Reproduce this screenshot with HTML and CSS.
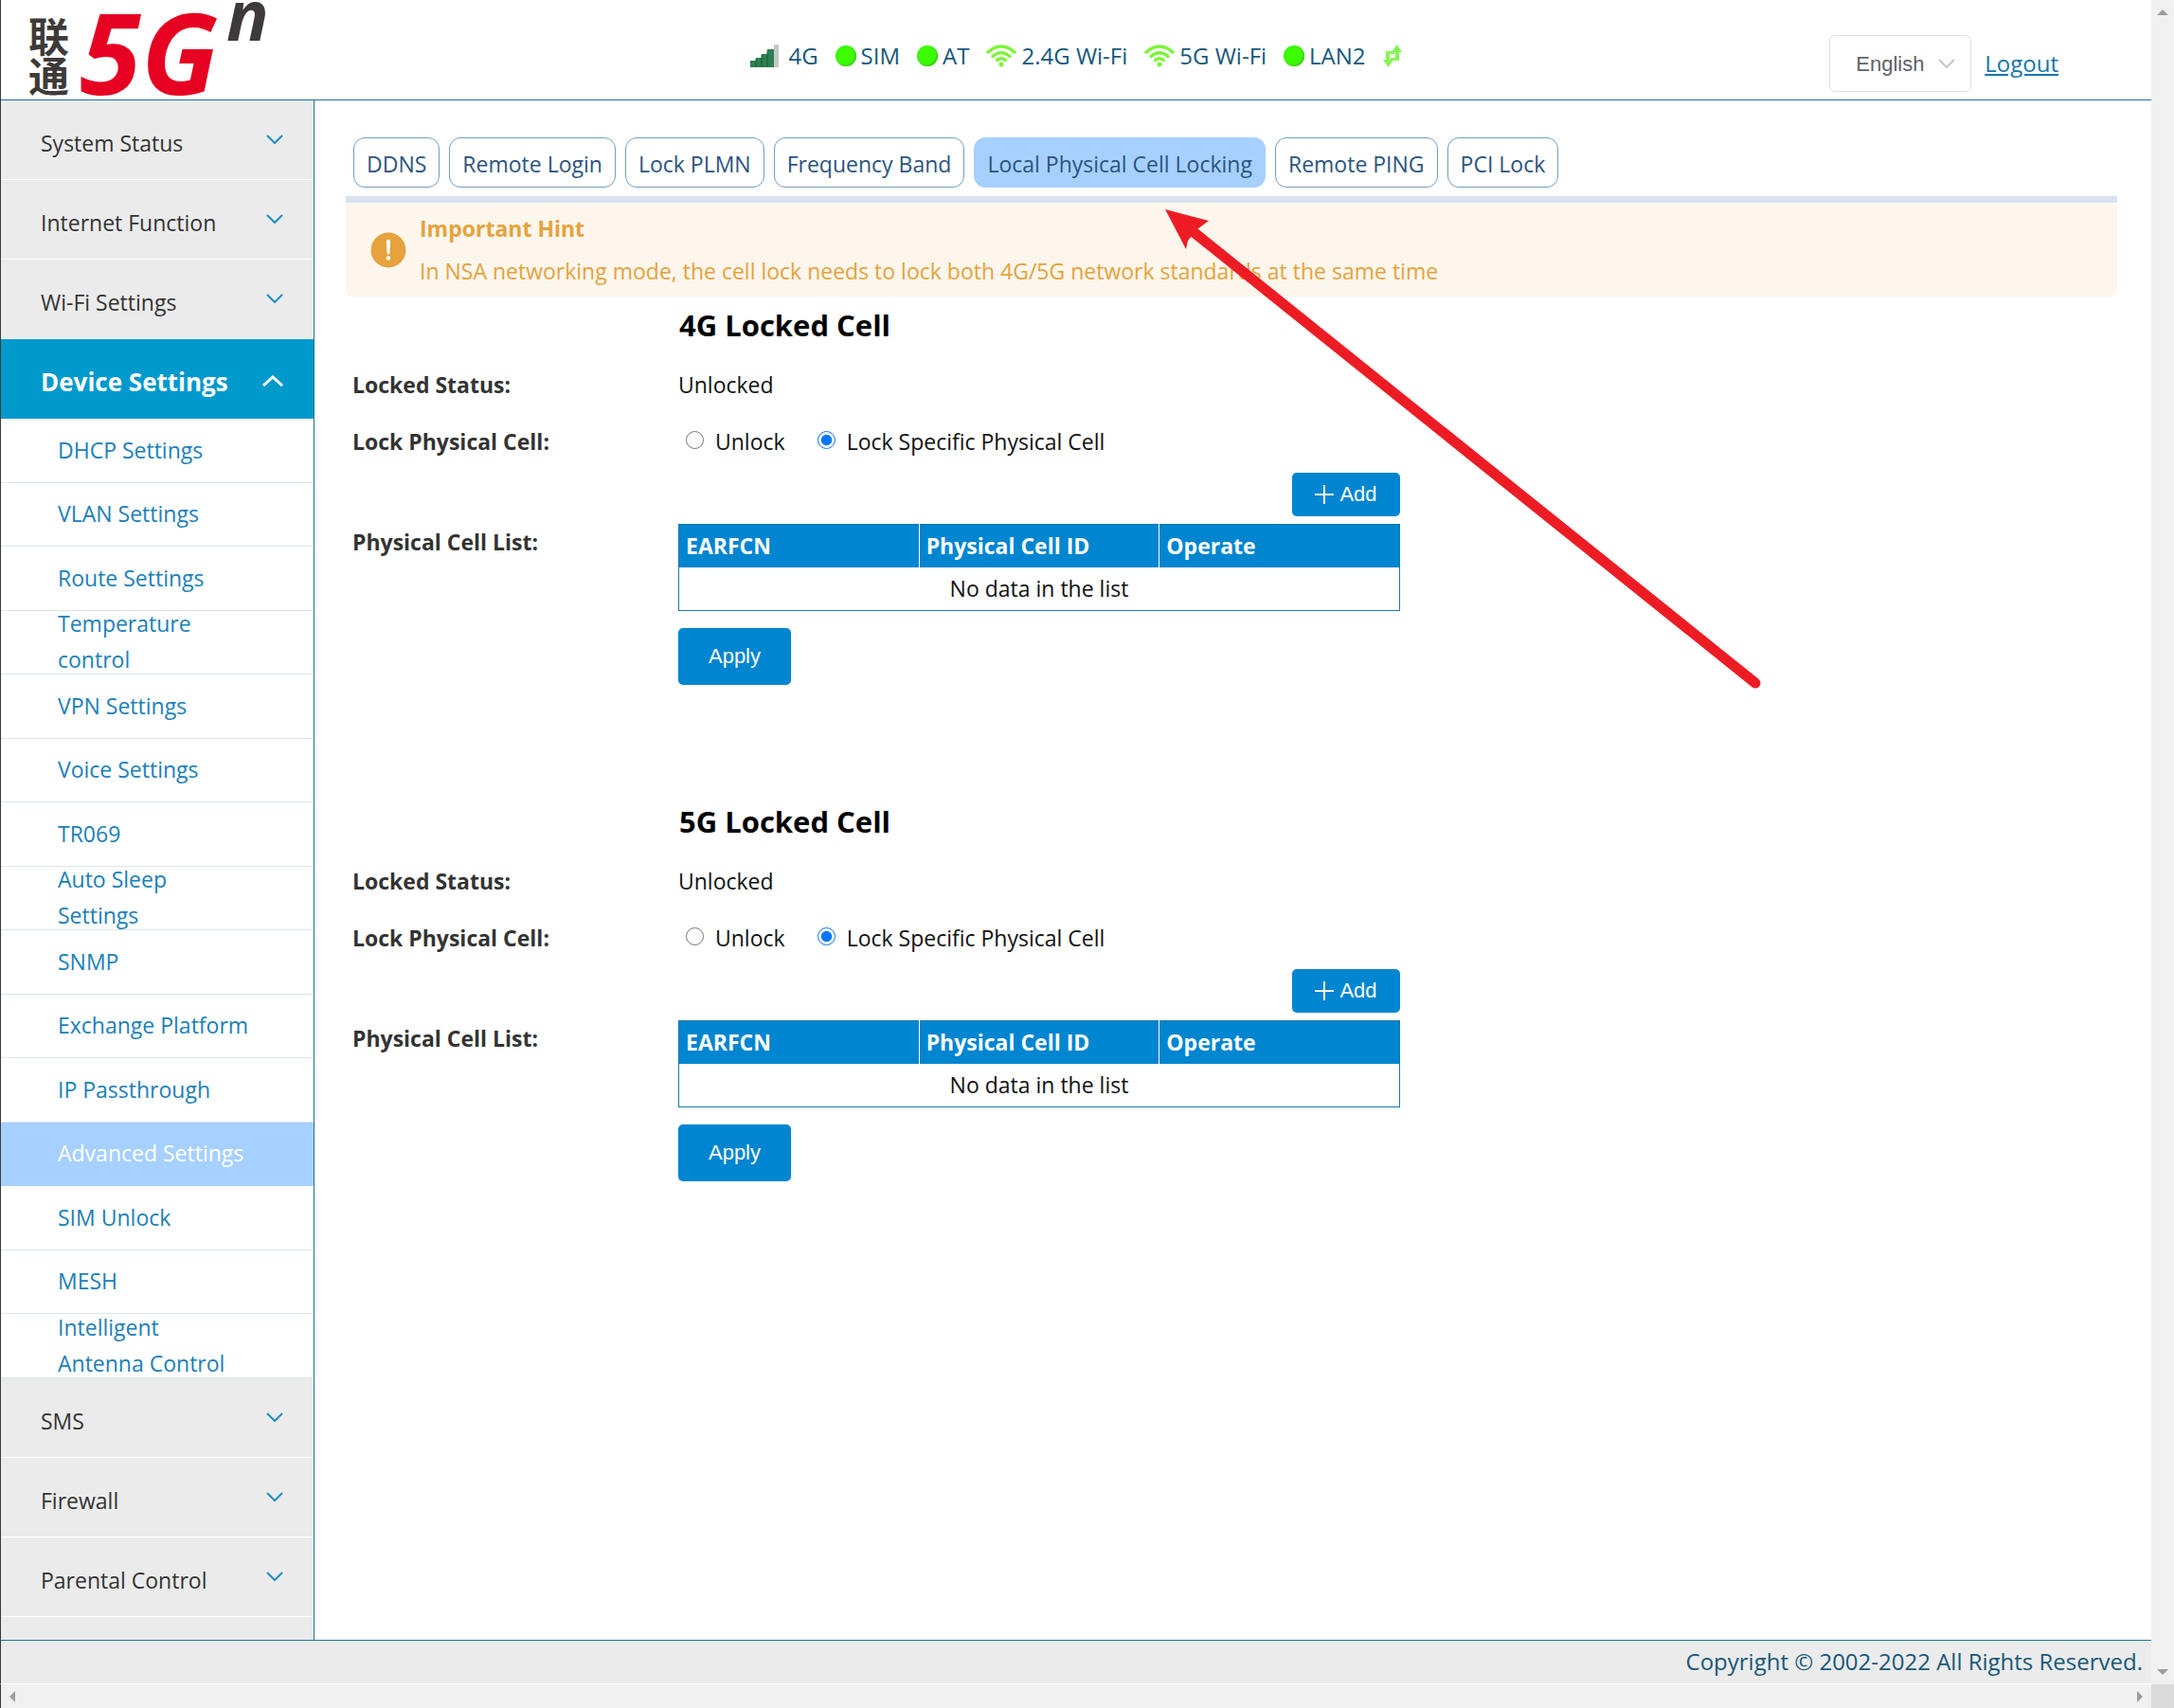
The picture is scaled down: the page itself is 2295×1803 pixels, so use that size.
FILE: index.html
```html
<!DOCTYPE html>
<html lang="en">
<head>
<meta charset="utf-8">
<title>Local Physical Cell Locking</title>
<link rel="stylesheet" href="styles.css">
</head>
<body>
<svg class="defs" width="0" height="0" aria-hidden="true">
  <symbol id="down" viewBox="0 0 18 10"><path d="M1 1l8 8 8-8" fill="none" stroke="currentColor" stroke-width="2"/></symbol>
  <symbol id="wifi" viewBox="0 0 32 24">
    <g fill="none" stroke="#7cf43a" stroke-width="3.500">
      <path d="M1 9Q16-5 31 9"/><path d="M6 13.500Q16 4 26 13.500"/><path d="M10.500 17.500Q16 12 21.500 17.500"/>
    </g>
    <circle cx="16" cy="21" r="2.500" fill="#7cf43a"/>
  </symbol>
</svg>
<div class="window">
  <div class="page">
    <header class="header">
      <div class="logo">
        <span class="logo-cn">联<br>通</span>
        <span class="logo-5g">5G</span>
        <span class="logo-n">n</span>
      </div>
      <div class="status">
        <span class="stat signal">
          <svg width="30" height="24" viewBox="0 0 30 24"><path d="M0 24v-7h6v-3h6v-4h6V5h7v19z" fill="#2c7f50"/><path d="M6 24v-9M12 24V11M18 24V7" stroke="#1c5c38"/><path d="M25 0h5v24h-5z" fill="#c4c8c6"/></svg>4G</span>
        <span class="stat"><i class="dot"></i>SIM</span>
        <span class="stat"><i class="dot"></i>AT</span>
        <span class="stat"><svg width="32" height="24"><use href="#wifi"/></svg>2.4G Wi-Fi</span>
        <span class="stat"><svg width="32" height="24"><use href="#wifi"/></svg>5G Wi-Fi</span>
        <span class="stat"><i class="dot"></i>LAN2</span>
        <svg width="20" height="24" viewBox="0 0 20 24"><path d="M14.500 0l5.500 8h-3v9H8v-3h5V8H9z" fill="#86f455"/><path d="M5.500 24L0 16h3V7h9v3H7v6h4z" fill="#86f455"/></svg>
      </div>
      <div class="account">
        <span class="lang">
          <select class="lang-select" aria-label="Language"><option>English</option></select>
          <svg class="lang-arrow" width="18" height="10"><use href="#down"/></svg>
        </span>
        <a class="logout" href="#">Logout</a>
      </div>
    </header>
    <div class="body">
      <nav class="sidebar">
        <a class="menu" href="#">System Status<svg width="18" height="10"><use href="#down"/></svg></a>
        <a class="menu" href="#">Internet Function<svg width="18" height="10"><use href="#down"/></svg></a>
        <a class="menu" href="#">Wi-Fi Settings<svg width="18" height="10"><use href="#down"/></svg></a>
        <a class="menu open" href="#">Device Settings<svg width="22" height="12" viewBox="0 0 22 12"><path d="M1 11L11 2l10 9" fill="none" stroke="#fff" stroke-width="3"/></svg></a>
        <ul class="submenu">
          <li><a href="#">DHCP Settings</a></li>
          <li><a href="#">VLAN Settings</a></li>
          <li><a href="#">Route Settings</a></li>
          <li><a href="#">Temperature<br>control</a></li>
          <li><a href="#">VPN Settings</a></li>
          <li><a href="#">Voice Settings</a></li>
          <li><a href="#">TR069</a></li>
          <li><a href="#">Auto Sleep<br>Settings</a></li>
          <li><a href="#">SNMP</a></li>
          <li><a href="#">Exchange Platform</a></li>
          <li><a href="#">IP Passthrough</a></li>
          <li class="current"><a href="#">Advanced Settings</a></li>
          <li><a href="#">SIM Unlock</a></li>
          <li><a href="#">MESH</a></li>
          <li><a href="#">Intelligent<br>Antenna Control</a></li>
        </ul>
        <a class="menu" href="#">SMS<svg width="18" height="10"><use href="#down"/></svg></a>
        <a class="menu" href="#">Firewall<svg width="18" height="10"><use href="#down"/></svg></a>
        <a class="menu" href="#">Parental Control<svg width="18" height="10"><use href="#down"/></svg></a>
      </nav>
      <main class="content">
        <div class="tabs">
          <button class="tab">DDNS</button>
          <button class="tab">Remote Login</button>
          <button class="tab">Lock PLMN</button>
          <button class="tab">Frequency Band</button>
          <button class="tab active">Local Physical Cell Locking</button>
          <button class="tab">Remote PING</button>
          <button class="tab">PCI Lock</button>
        </div>
        <div class="hint">
          <svg width="38" height="38" viewBox="0 0 38 38"><circle cx="19" cy="19" r="18.500" fill="#e6a23c"/><path d="M16.800 10a2.200 2.200 0 0 1 4.400 0l-.7 12a1.500 1.500 0 0 1-3 0z" fill="#fff"/><circle cx="19" cy="27.500" r="2.300" fill="#fff"/></svg>
          <div>
            <p class="hint-title">Important Hint</p>
            <p class="hint-text">In NSA networking mode, the cell lock needs to lock both 4G/5G network standards at the same time</p>
          </div>
        </div>
        <section class="cell">
          <h2 class="cell-title">4G Locked Cell</h2>
          <div class="row"><span class="label">Locked Status:</span><span>Unlocked</span></div>
          <div class="row"><span class="label">Lock Physical Cell:</span>
            <div class="radios">
              <label><input type="radio" name="lock4g">Unlock</label>
              <label><input type="radio" name="lock4g" checked>Lock Specific Physical Cell</label>
            </div>
          </div>
          <div class="list">
            <button class="btn add"><svg width="20" height="20" viewBox="0 0 20 20"><path d="M10 0v20M0 10h20" stroke="#fff" stroke-width="2"/></svg>Add</button>
            <span class="label">Physical Cell List:</span>
            <table class="table">
              <thead><tr><th>EARFCN</th><th>Physical Cell ID</th><th>Operate</th></tr></thead>
              <tbody><tr><td colspan="3">No data in the list</td></tr></tbody>
            </table>
            <button class="btn apply">Apply</button>
          </div>
        </section>
        <section class="cell">
          <h2 class="cell-title">5G Locked Cell</h2>
          <div class="row"><span class="label">Locked Status:</span><span>Unlocked</span></div>
          <div class="row"><span class="label">Lock Physical Cell:</span>
            <div class="radios">
              <label><input type="radio" name="lock5g">Unlock</label>
              <label><input type="radio" name="lock5g" checked>Lock Specific Physical Cell</label>
            </div>
          </div>
          <div class="list">
            <button class="btn add"><svg width="20" height="20" viewBox="0 0 20 20"><path d="M10 0v20M0 10h20" stroke="#fff" stroke-width="2"/></svg>Add</button>
            <span class="label">Physical Cell List:</span>
            <table class="table">
              <thead><tr><th>EARFCN</th><th>Physical Cell ID</th><th>Operate</th></tr></thead>
              <tbody><tr><td colspan="3">No data in the list</td></tr></tbody>
            </table>
            <button class="btn apply">Apply</button>
          </div>
        </section>
        <svg class="pointer" width="640" height="520" viewBox="0 0 640 520" aria-hidden="true"><path d="M30 24L623 500" stroke="#ed1c24" stroke-width="11" stroke-linecap="round"/><path d="M0 0l46 12-12 9-10 12-2 9z" fill="#ed1c24"/></svg>
      </main>
    </div>
    <footer class="footer">Copyright © 2002-2022 All Rights Reserved.</footer>
  </div>
  <div class="bar-v" aria-hidden="true">
    <svg width="12" height="6" viewBox="0 0 12 6"><path d="M6 0l6 6H0z"/></svg>
    <svg width="12" height="6" viewBox="0 0 12 6"><path d="M0 0h12L6 6z"/></svg>
  </div>
  <div class="bar-h" aria-hidden="true">
    <svg width="6" height="12" viewBox="0 0 6 12"><path d="M6 0v12L0 6z"/></svg>
    <svg width="6" height="12" viewBox="0 0 6 12"><path d="M0 0l6 6-6 6z"/></svg>
  </div>
  <div class="corner"></div>
</div>
</body>
</html>
```
FILE: styles.css
```css
* { box-sizing: border-box; }

body {
  margin: 0;
  font-family: "Open Sans", "Noto Sans", sans-serif;
  font-size: 23px;
  line-height: 38px;
  color: #111;
  background: #fff;
}

p, h2, ul { margin: 0; padding: 0; }
a { text-decoration: none; }
button { cursor: pointer; }
.defs { position: absolute; }

.window {
  display: grid;
  grid-template-columns: minmax(0, 1fr) 24px;
  grid-template-rows: 1fr 25px;
  min-height: 100vh;
}

.page {
  display: flex;
  flex-direction: column;
  border-left: 1px solid #3a3a3c;
  border-bottom: 1px solid #fff;
}

/* Header */
.header {
  display: grid;
  grid-template-columns: 1fr auto 1fr;
  align-items: start;
  height: 106px;
  border-bottom: 1px solid #1f7396;
}

.logo {
  display: grid;
  grid-template-columns: 54px 155px auto;
  align-items: start;
  justify-content: start;
  height: 105px;
  padding-left: 29px;
}
.logo-cn { padding-top: 15px; font: 700 43px/42px "Noto Sans CJK SC", sans-serif; color: #3e3a39; }
.logo-5g { font: italic 700 118px/110px "Open Sans", sans-serif; color: #e60021; }
.logo-n { font: italic 700 74px/30px "Open Sans", sans-serif; color: #3e3a39; }

.status {
  display: flex;
  align-items: center;
  gap: 18px;
  padding-top: 40px;
  color: #17587a;
  font-size: 24px;
}
.stat { display: flex; align-items: center; gap: 5px; }
.signal { gap: 10px; }
.dot {
  width: 22px;
  height: 22px;
  border-radius: 50%;
  background: #3dfb04;
  box-shadow: inset -1px -1px 2px #2fc40a;
}

.account {
  display: flex;
  justify-content: flex-end;
  align-items: center;
  gap: 14px;
  padding: 37px 98px 0 0;
}
.lang { display: grid; align-items: center; }
.lang-select {
  grid-area: 1 / 1;
  appearance: none;
  width: 150px;
  height: 60px;
  padding: 0 27px;
  border: 1px solid #dcdfe6;
  border-radius: 6px;
  background: #fff;
  color: #606266;
  font: 22px "Liberation Sans", sans-serif;
}
.lang-arrow {
  grid-area: 1 / 1;
  justify-self: end;
  margin-right: 17px;
  color: #c0c4cc;
  pointer-events: none;
}
.logout { color: #1677a8; font-size: 24px; text-decoration: underline; }

/* Sidebar */
.body { display: flex; flex: 1; }

.sidebar {
  flex: 0 0 331px;
  padding-bottom: 24px;
  background: #ebebeb;
  border-right: 1px solid #1f7396;
}
.menu {
  display: flex;
  justify-content: space-between;
  align-items: center;
  height: 84px;
  padding: 6px 32px 0 42px;
  border-bottom: 1px solid #fff;
  color: #333;
}
.menu svg { color: #1b8fc4; margin-bottom: 8px; }
.menu.open {
  background: #0099cc;
  border-bottom-color: #0099cc;
  color: #fff;
  font-size: 26px;
  font-weight: 700;
}
.menu.open svg { margin-bottom: 2px; }

.submenu { list-style: none; background: #fff; }
.submenu li {
  display: flex;
  align-items: center;
  height: 67px;
  padding: 0 0 2px 60px;
  border-bottom: 1px solid #dde6ea;
}
.submenu li:nth-child(odd) { height: 68px; }
.submenu a { color: #1b80b8; }
.submenu .current { background: #a6d0ff; border-color: #a6d0ff; }
.submenu .current a { color: #fff; }

/* Content */
.content {
  position: relative;
  flex: 1;
  min-width: 0;
  padding: 39px 36px 0 33px;
}
.tabs {
  display: flex;
  gap: 10px;
  padding: 0 8px 9px;
  border-bottom: 7px solid #d9e2ee;
}
.tab {
  height: 53px;
  padding: 2px 13px 0;
  border: 1px solid #6f9fbf;
  border-radius: 12px;
  background: #fff;
  color: #2b5480;
  font: inherit;
}
.tab.active { background: #a6d0ff; border-color: #a6d0ff; }

.hint {
  display: flex;
  align-items: center;
  gap: 14px;
  height: 99px;
  padding-left: 26px;
  border-radius: 0 0 6px 6px;
  background: #fdf6ec;
  color: #e6a23c;
}
.hint-title { font-weight: 700; padding-bottom: 7px; }

.cell { height: 524px; }
.cell-title {
  padding: 11px 0 14px 352px;
  font-size: 31px;
  line-height: 38px;
  color: #000;
}
.row, .list {
  display: grid;
  grid-template-columns: 344px 762px;
  padding-left: 7px;
}
.row { align-items: center; height: 60px; }
.label { font-weight: 700; color: #333; }

.radios { display: flex; gap: 34px; }
.radios label { display: flex; align-items: center; gap: 12px; }
.radios input { width: 19px; height: 19px; margin: 0 0 3px; accent-color: #0075ff; }
.radios label:first-child { padding-left: 8px; }

.btn {
  border: 0;
  border-radius: 5px;
  background: #0085d0;
  color: #fff;
  font: 22px "Liberation Sans", sans-serif;
}
.add {
  grid-column: 2;
  justify-self: end;
  display: flex;
  align-items: center;
  justify-content: center;
  gap: 6px;
  width: 114px;
  height: 46px;
  margin: 3px 0 8px;
}
.apply { grid-column: 2; width: 119px; height: 60px; margin-top: 18px; }

.table {
  width: 100%;
  table-layout: fixed;
  border-collapse: collapse;
  border: 1px solid #1a78a6;
}
.table th {
  height: 45px;
  padding: 0 8px 1px 7px;
  background: #0085d0;
  color: #fff;
  text-align: left;
}
.table th + th { border-left: 1px solid #fff; }
.table td { height: 46px; padding: 0; text-align: center; }

/* Callout arrow laid over the form */
.pointer { position: absolute; left: 898px; top: 115px; pointer-events: none; }

.footer {
  height: 46px;
  padding: 3px 9px 0;
  border-top: 1px solid #1f7396;
  background: #ebebeb;
  color: #17587a;
  font-size: 24px;
  text-align: right;
}

/* Scroll bars */
.bar-v, .bar-h { display: flex; justify-content: space-between; background: #f0f0f0; fill: #9c9c9c; }
.bar-v { flex-direction: column; align-items: center; padding: 10px 0; }
.bar-h { align-items: center; padding: 0 9px; border-left: 1px solid #3a3a3c; }
.corner { background: #dadada; }
```
